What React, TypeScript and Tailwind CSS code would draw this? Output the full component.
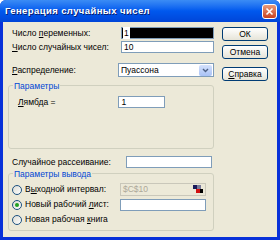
import React from 'react'

const font = { fontFamily: '"Liberation Sans", "DejaVu Sans", sans-serif' }

function U({ children }: { children: React.ReactNode }) {
  return <span className="underline underline-offset-1">{children}</span>
}

function XpButton({ children }: { children: React.ReactNode }) {
  return (
    <button className="h-[14px] w-[46px] rounded-[3px] border border-[#003c74] bg-gradient-to-b from-white to-[#e6e4d8] text-[8.5px] leading-none text-black">
      {children}
    </button>
  )
}

function Radio({ checked }: { checked?: boolean }) {
  return (
    <span className="flex h-[10px] w-[10px] items-center justify-center rounded-full border border-[#1c5180] bg-gradient-to-br from-[#dcdcd4] to-white">
      {checked && <span className="h-[4px] w-[4px] rounded-full bg-[#21a121]" />}
    </span>
  )
}

export default function App() {
  return (
    <div className="flex h-[240px] w-[280px] flex-col overflow-hidden rounded-t-[6px] bg-[#0831d9] text-[8.5px] text-black" style={font}>
      {/* Title bar */}
      <div className="flex h-[22px] shrink-0 items-center bg-gradient-to-b from-[#3b8cf5] via-[#0058ee] to-[#0045d8] pl-[5px] pr-[3px]">
        <span className="text-[9.5px] font-bold tracking-[0.4px] text-white [text-shadow:1px_1px_0_#0a1e6e]">
          Генерация случайных чисел
        </span>
        <span className="ml-auto flex h-[15px] w-[15px] items-center justify-center rounded-[3px] border border-white bg-gradient-to-b from-[#e89a7a] to-[#c7401e]">
          <svg width="9" height="9" viewBox="0 0 9 9">
            <path d="M1.5 1.5l6 6M7.5 1.5l-6 6" stroke="white" strokeWidth="1.6" />
          </svg>
        </span>
      </div>

      {/* Body */}
      <div className="mx-[3px] mb-[3px] flex flex-1 bg-[#ece9d8] pl-[5px] pt-[5px]">
        <div className="flex w-[206px] flex-col">
          <div className="flex h-[12px] items-center">
            <span className="pl-[4px]">Число <U>п</U>еременных:</span>
            <span className="ml-auto flex h-[12px] w-[93px] items-center border border-[#7f9db9] bg-black pl-[1px] text-white">
              <span className="bg-white px-[1px] text-black">1</span>
            </span>
          </div>
          <div className="mt-[2px] flex h-[12px] items-center">
            <span className="pl-[4px]"><U>Ч</U>исло случайных чисел:</span>
            <span className="ml-auto flex h-[12px] w-[93px] items-center border border-[#7f9db9] bg-white pl-[2px]">10</span>
          </div>
          <div className="mt-[10px] flex h-[14px] items-center">
            <span className="pl-[4px]"><U>Р</U>аспределение:</span>
            <span className="ml-auto flex h-[14px] w-[96px] items-center border border-[#7f9db9] bg-white pl-[2px]">
              Пуассона
              <span className="ml-auto mr-[1px] flex h-[11px] w-[13px] items-center justify-center rounded-[2px] bg-gradient-to-b from-[#d4e1fc] to-[#a9c2f5]">
                <svg width="7" height="5" viewBox="0 0 7 5">
                  <path d="M1 1l2.5 2.5L6 1" stroke="#4d6185" strokeWidth="1.4" fill="none" />
                </svg>
              </span>
            </span>
          </div>

          {/* Параметры */}
          <div className="relative mt-[8px] h-[64px] rounded-[3px] border border-[#d0d0bf]">
            <span className="absolute -top-[6px] left-[4px] bg-[#ece9d8] px-[1px] text-[#0046d5]">Параметры</span>
            <div className="mt-[10px] flex h-[12px] items-center">
              <span className="pl-[9px]"><U>Л</U>ямбда =</span>
              <span className="ml-[63px] flex h-[12px] w-[47px] items-center border border-[#7f9db9] bg-white pl-[2px]">1</span>
            </div>
          </div>

          <div className="mt-[7px] flex h-[12px] items-center">
            <span className="pl-[4px]">Случайное рассеивание:</span>
            <span className="ml-auto mr-[2px] h-[12px] w-[86px] border border-[#7f9db9] bg-white" />
          </div>

          {/* Параметры вывода */}
          <div className="relative mt-[5px] h-[58px] rounded-[3px] border border-[#d0d0bf] pt-[9px]">
            <span className="absolute -top-[6px] left-[4px] bg-[#ece9d8] px-[1px] text-[#0046d5]">Параметры вывода</span>
            <div className="flex h-[13px] items-center pl-[3px]">
              <Radio />
              <span className="ml-[3px]">В<U>ы</U>ходной интервал:</span>
              <span className="ml-auto mr-[7px] flex h-[13px] w-[86px] items-center border border-[#c9c7ba] bg-[#ece9d8] pl-[2px] text-[#aca899]">
                $C$10
                <span className="ml-auto mr-[2px] flex h-[9px] w-[10px] flex-col">
                  <span className="flex">
                    <span className="h-[4px] w-[4px] bg-[#1a1a5a]" />
                    <span className="h-[4px] w-[4px] bg-[#7a7a9a]" />
                  </span>
                  <span className="ml-[3px] flex">
                    <span className="h-[4px] w-[4px] bg-[#d01010]" />
                    <span className="h-[4px] w-[3px] bg-black" />
                  </span>
                </span>
              </span>
            </div>
            <div className="mt-[2px] flex h-[13px] items-center pl-[3px]">
              <Radio checked />
              <span className="ml-[3px]">Новый рабочий <U>л</U>ист:</span>
              <span className="ml-auto mr-[7px] h-[12px] w-[86px] border border-[#7f9db9] bg-white" />
            </div>
            <div className="mt-[2px] flex h-[13px] items-center pl-[3px]">
              <Radio />
              <span className="ml-[3px]">Новая рабочая <U>к</U>нига</span>
            </div>
          </div>
        </div>

        <div className="ml-[8px] flex flex-col">
          <XpButton>ОК</XpButton>
          <div className="mt-[4px]"><XpButton>Отмена</XpButton></div>
          <div className="mt-[8px]"><XpButton><U>С</U>правка</XpButton></div>
        </div>
      </div>
    </div>
  )
}
